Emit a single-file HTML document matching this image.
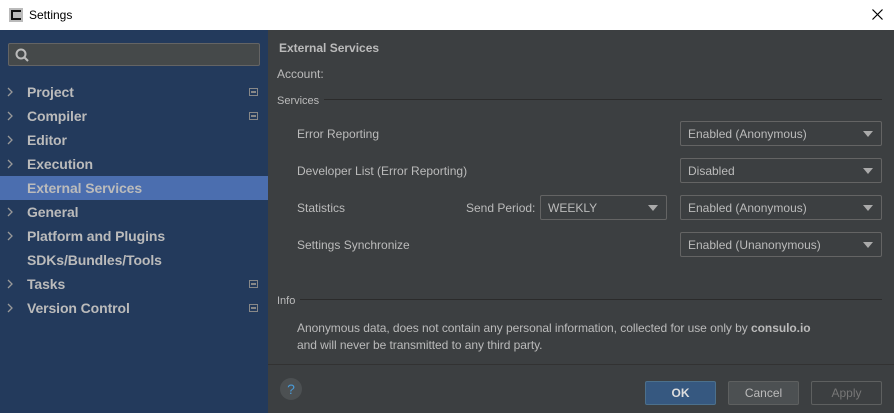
<!DOCTYPE html>
<html><head><style>
*{margin:0;padding:0;box-sizing:border-box}
body{width:894px;height:413px;overflow:hidden;background:#3c3f41;font-family:"Liberation Sans",sans-serif;font-size:12px;color:#bbbbbb;position:relative}
.a{position:absolute}
.title{left:0;top:0;width:894px;height:30px;background:#fff;color:#000;font-size:12px}
.side{left:0;top:30px;width:268px;height:383px;background:#233a5c}
.item{position:absolute;left:0;width:268px;height:24px;line-height:24px;font-weight:bold;font-size:14px;color:#bbbbbb;padding-left:27px;letter-spacing:-0.1px}
.item svg{position:absolute;left:7px;top:7px}
.item .ic{position:absolute;left:249px;top:8px;width:9px;height:8px;border:1px solid #888}
.item .ic:after{content:"";position:absolute;left:1px;top:2px;width:5px;height:2px;background:#888}
.dd{position:absolute;height:25px;border:1px solid #646464;border-radius:2px;background:#3c3f41;line-height:24px;padding-left:7px;color:#bbb}
.dd:after{content:"";position:absolute;right:8px;top:9px;border-left:5px solid transparent;border-right:5px solid transparent;border-top:6px solid #aaa}
.btn{position:absolute;top:381px;width:71px;height:24px;border:1px solid #5e6060;border-radius:2px;background:#4c5052;text-align:center;line-height:22px}
</style></head><body>
<div class="a title">
 <div class="a" style="left:9px;top:8px;width:14px;height:14px;background:#bbb"><div class="a" style="left:2px;top:2px;width:10px;height:10px;background:#111"></div><div class="a" style="left:4px;top:4px;width:8px;height:6px;background:#bbb"></div></div>
 <div class="a" style="left:29px;top:8px">Settings</div>
 <svg class="a" style="left:872px;top:9px" width="11" height="11"><path d="M0.5 0.5L10.5 10.5M10.5 0.5L0.5 10.5" stroke="#000" stroke-width="1.2"/></svg>
</div>
<div class="a side">
 <div class="a" style="left:8px;top:13px;width:252px;height:23px;background:#45494a;border:1px solid #646464;border-radius:2px">
  <svg class="a" style="left:6px;top:4px" width="14" height="14"><circle cx="6" cy="6" r="4.5" fill="none" stroke="#bbb" stroke-width="2"/><line x1="9" y1="9" x2="13" y2="13" stroke="#bbb" stroke-width="2"/></svg>
 </div>
 <div class="item" style="top:50px"><svg width="6" height="10"><path d="M1 1L5 5L1 9" fill="none" stroke="#999" stroke-width="1.3"/></svg>Project<span class="ic"></span></div>
 <div class="item" style="top:74px"><svg width="6" height="10"><path d="M1 1L5 5L1 9" fill="none" stroke="#999" stroke-width="1.3"/></svg>Compiler<span class="ic"></span></div>
 <div class="item" style="top:98px"><svg width="6" height="10"><path d="M1 1L5 5L1 9" fill="none" stroke="#999" stroke-width="1.3"/></svg>Editor</div>
 <div class="item" style="top:122px"><svg width="6" height="10"><path d="M1 1L5 5L1 9" fill="none" stroke="#999" stroke-width="1.3"/></svg>Execution</div>
 <div class="item" style="top:146px;background:#4b6eaf">External Services</div>
 <div class="item" style="top:170px"><svg width="6" height="10"><path d="M1 1L5 5L1 9" fill="none" stroke="#999" stroke-width="1.3"/></svg>General</div>
 <div class="item" style="top:194px"><svg width="6" height="10"><path d="M1 1L5 5L1 9" fill="none" stroke="#999" stroke-width="1.3"/></svg>Platform and Plugins</div>
 <div class="item" style="top:218px">SDKs/Bundles/Tools</div>
 <div class="item" style="top:242px"><svg width="6" height="10"><path d="M1 1L5 5L1 9" fill="none" stroke="#999" stroke-width="1.3"/></svg>Tasks<span class="ic"></span></div>
 <div class="item" style="top:266px"><svg width="6" height="10"><path d="M1 1L5 5L1 9" fill="none" stroke="#999" stroke-width="1.3"/></svg>Version Control<span class="ic"></span></div>
</div>
<div class="a" style="left:279px;top:41px;font-weight:bold">External Services</div>
<div class="a" style="left:277px;top:67px">Account:</div>
<div class="a" style="left:277px;top:95px;font-size:11px">Services</div>
<div class="a" style="left:324px;top:99px;width:558px;height:1px;background:#2b2b2b"></div>
<div class="a" style="left:297px;top:127px">Error Reporting</div>
<div class="a" style="left:297px;top:164px">Developer List (Error Reporting)</div>
<div class="a" style="left:297px;top:201px">Statistics</div>
<div class="a" style="left:466px;top:201px">Send Period:</div>
<div class="a" style="left:297px;top:238px">Settings Synchronize</div>
<div class="dd" style="left:680px;top:121px;width:202px">Enabled (Anonymous)</div>
<div class="dd" style="left:680px;top:158px;width:202px">Disabled</div>
<div class="dd" style="left:540px;top:195px;width:127px">WEEKLY</div>
<div class="dd" style="left:680px;top:195px;width:202px">Enabled (Anonymous)</div>
<div class="dd" style="left:680px;top:232px;width:202px">Enabled (Unanonymous)</div>
<div class="a" style="left:277px;top:295px;font-size:11px">Info</div>
<div class="a" style="left:300px;top:299px;width:582px;height:1px;background:#2b2b2b"></div>
<div class="a" style="left:297px;top:320px;line-height:17px;letter-spacing:-0.05px">Anonymous data, does not contain any personal information, collected for use only by <b>consulo.io</b><br>and will never be transmitted to any third party.</div>
<div class="a" style="left:268px;top:364px;width:626px;height:1px;background:#323232"></div>
<div class="a" style="left:280px;top:378px;width:22px;height:22px;border-radius:50%;background:#4c5052;color:#4a9ad6;text-align:center;line-height:22px;font-size:14px">?</div>
<div class="btn" style="left:645px;background:#365880;border-color:#4c708c;color:#ddd;font-weight:bold">OK</div>
<div class="btn" style="left:728px">Cancel</div>
<div class="btn" style="left:811px;background:#3c3f41;color:#777">Apply</div>
</body></html>
